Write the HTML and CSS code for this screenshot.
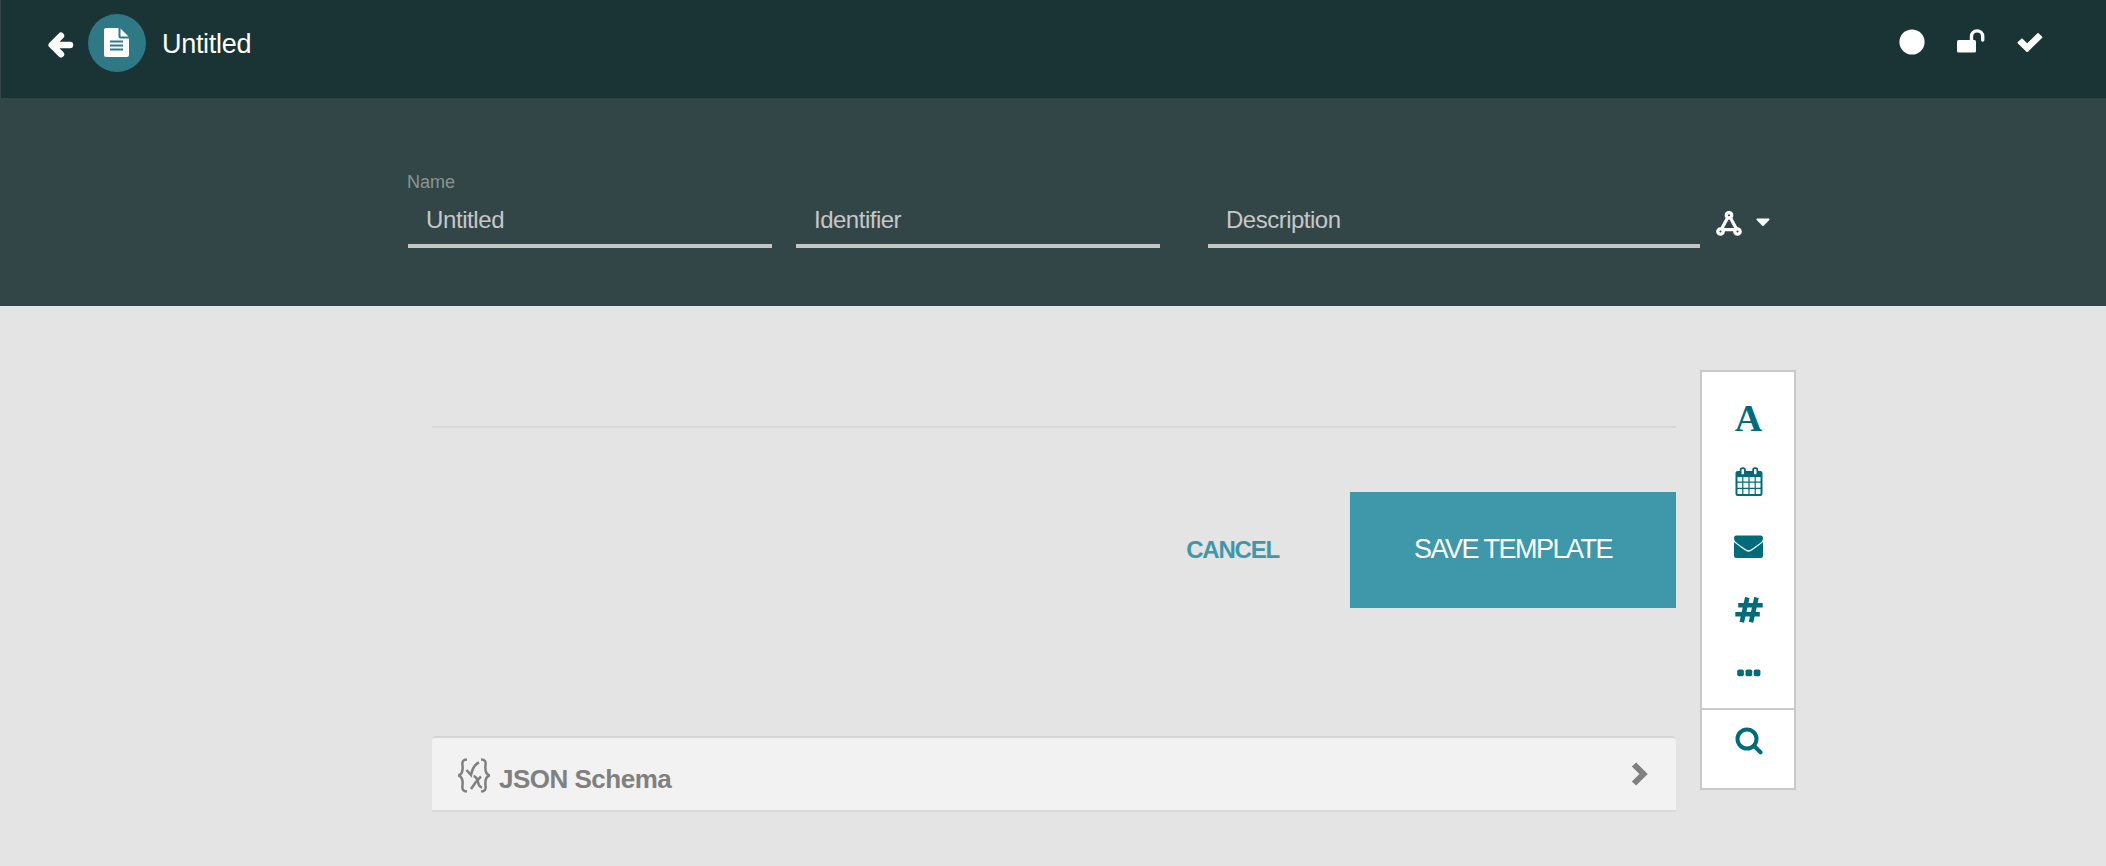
FILE: index.html
```html
<!DOCTYPE html>
<html lang="en">
<head>
<meta charset="utf-8">
<title>Untitled</title>
<link rel="stylesheet" href="styles.css">
</head>
<body>
<header class="topbar">
  <svg class="back" viewBox="0 0 26 26"><path d="M22 13H5M13 3.700L3.700 13L13 22.300" fill="none" stroke="#fff" stroke-width="6.400" stroke-linecap="round" stroke-linejoin="round"/></svg>
  <span class="avatar"><svg width="26" height="30" viewBox="0 0 26 30"><path fill="#fff" d="M2 0H14.500V8.500Q14.500 10.500 16.500 10.500H25V27Q25 29 23 29H2Q0 29 0 27V2Q0 0 2 0ZM16.500 .5L24.500 8.600H16.500Z"/><path d="M6 13.500H19M6 17.500H19M6 21.500H19" stroke="#2f7886" stroke-width="2"/></svg></span>
  <h1 class="title">Untitled</h1>
  <div class="actions">
    <svg width="26" height="26" viewBox="0 0 26 26"><circle cx="13" cy="13" r="12.600" fill="#fff"/></svg>
    <svg width="28" height="26" viewBox="0 0 28 26"><rect x="0" y="11" width="19" height="12.500" rx="1.500" fill="#fff"/><path d="M14.500 12V7.500A5.600 5.600 0 0 1 25.700 7.500V11" fill="none" stroke="#fff" stroke-width="3.400" stroke-linecap="round"/></svg>
    <svg width="26" height="26" viewBox="0 0 26 26"><path d="M2.800 11.300L5 9.300L10.200 14.300L21 3.700L25 7.500Q25.800 8.300 25 9.100L11 22.700Q10.200 23.400 9.400 22.700L.9 14.500Q0 13.500 .9 12.700Z" fill="#fff"/></svg>
  </div>
</header>
<section class="meta">
  <div class="field"><span class="label">Name</span><span class="value w1">Untitled</span></div>
  <div class="field"><span class="value w2">Identifier</span></div>
  <div class="field wide"><span class="value w3">Description</span></div>
  <svg class="nodes" width="26" height="26" viewBox="0 0 26 26"><g fill="none" stroke="#fff" stroke-width="3.300"><circle cx="13" cy="4.200" r="2.700"/><circle cx="4.500" cy="20.500" r="2.700"/><circle cx="21.500" cy="20.500" r="2.700"/><path d="M11.500 7L5.500 18M14.500 7L20.500 18M7 18.700H19"/></g></svg>
  <svg class="caret" width="14" height="9" viewBox="0 0 14 9"><path fill="#fff" d="M1 .5H13Q14 1 13.300 2L7.700 7.700Q7 8.400 6.300 7.700L.7 2Q0 1 1 .5Z"/></svg>
</section>
<div class="workspace">
  <main class="form">
    <hr class="rule">
    <div class="buttons"><button class="cancel">CANCEL</button><button class="save">SAVE TEMPLATE</button></div>
    <div class="panel">
      <svg class="json" width="32" height="36" viewBox="0 0 32 36"><g fill="none" stroke="#808080" stroke-width="2.500"><path d="M9 1.500C5 1.500 4 3.500 4.500 7.500C5 12 5 16 .5 17.500C5 19 5 23 4.500 27.500C4 31.500 5 33.500 9 33.500M23 1.500C27 1.500 28 3.500 27.500 7.500C27 12 27 16 31.500 17.500C27 19 27 23 27.500 27.500C28 31.500 27 33.500 23 33.500"/><path d="M8.500 12L13 17Q15 7 21 4.500M15.500 18Q19 19 20 24T24 29.500M23 18.500Q18 23 13 31"/></g></svg>
      <span class="panel-title">JSON Schema</span>
      <svg class="chevron" width="18" height="24" viewBox="0 0 18 24"><path d="M3 2.500L12.500 12L3 21.500" fill="none" stroke="#808080" stroke-width="6"/></svg>
    </div>
  </main>
  <aside class="toolbox">
    <div class="tools">
      <span class="font-tool">A</span>
      <svg width="28" height="30" viewBox="0 0 28 30"><rect x=".5" y="4" width="27" height="25" rx="2" fill="#006b7b"/><path d="M2.500 10H7.200V14.500H2.500ZM8.400 10H13.400V14.500H8.400ZM14.600 10H19.600V14.500H14.600ZM20.800 10H25.500V14.500H20.800ZM2.500 15.800H7.200V20.800H2.500ZM8.400 15.800H13.400V20.800H8.400ZM14.600 15.800H19.600V20.800H14.600ZM20.800 15.800H25.500V20.800H20.800ZM2.500 22H7.200V27H2.500ZM8.400 22H13.400V27H8.400ZM14.600 22H19.600V27H14.600ZM20.800 22H25.500V27H20.800Z" fill="#fff"/><g fill="#fff" stroke="#006b7b" stroke-width="1.800"><rect x="5.600" y="1.200" width="4.300" height="7" rx="1.800"/><rect x="18.100" y="1.200" width="4.300" height="7" rx="1.800"/></g></svg>
      <svg width="29" height="24" viewBox="0 0 29 24"><path fill="#006b7b" d="M2.500 .5H26.500Q29 .5 29 3C29 5.500 27.500 7 25.500 8.500L17 14.500Q14.500 16 12 14.500L3.500 8.500C1.500 7 0 5.500 0 3Q0 .5 2.500 .5ZM0 7Q1 8.200 10.500 15Q14.500 18.300 18.500 15Q28 8.200 29 7V20.500Q29 23 26.500 23H2.500Q0 23 0 20.500Z"/></svg>
      <svg width="28" height="26" viewBox="0 0 28 26"><path d="M12.300 .5L6.800 25.300M21.500 .5L16 25.300M3.200 8.300H27.700M.3 17.300H24.800" fill="none" stroke="#006b7b" stroke-width="4.600"/></svg>
      <svg width="24" height="8" viewBox="0 0 24 8"><g fill="#006b7b"><rect x=".2" y=".5" width="6.700" height="6.700" rx="1.800"/><rect x="8.500" y=".5" width="6.700" height="6.700" rx="1.800"/><rect x="16.700" y=".5" width="6.700" height="6.700" rx="1.800"/></g></svg>
    </div>
    <div class="search"><svg width="28" height="28" viewBox="0 0 28 28"><circle cx="12" cy="12" r="9.500" fill="none" stroke="#006b7b" stroke-width="4"/><path d="M19 19L25.500 25.300" stroke="#006b7b" stroke-width="4" stroke-linecap="round"/></svg></div>
  </aside>
</div>
</body>
</html>
```
FILE: styles.css
```css
* { box-sizing: border-box; }
body { margin: 0; height: 866px; overflow: hidden; background: #e4e4e4; font-family: "Liberation Sans", Arial, sans-serif; }
svg { display: block; flex: none; }
.topbar { display: flex; align-items: center; height: 98px; padding: 0 63px 12px 47px; background: #1a3335; border-left: 1px solid #324648; color: #fff; }
.back { width: 26px; height: 26px; margin-top: 3px; }
.avatar { display: flex; align-items: center; justify-content: center; width: 58px; height: 58px; margin-left: 14px; padding-bottom: 1px; border-radius: 50%; background: #2f7886; }
.title { margin: 1px 0 0 16px; font-size: 27px; font-weight: 400; line-height: 32px; letter-spacing: -.3px; }
.actions { display: flex; align-items: center; gap: 32px; margin: -3px 0 0 auto; }
.meta { display: flex; height: 208px; padding-left: 408px; background: #324648; color: #c7c7c7; }
.field { display: flex; flex-direction: column; justify-content: flex-end; width: 364px; height: 150px; margin-right: 24px; border-bottom: 4px solid #c5c5c3; }
.wide { width: 492px; margin-left: 24px; margin-right: 16px; }
.label { height: 20px; margin: 0 0 14px -1px; font-size: 18px; line-height: 20px; color: #899492; }
.value { height: 38px; padding-left: 18px; font-size: 24px; line-height: 28px; }
.w1 { letter-spacing: -.4px; }
.w2, .w3 { letter-spacing: -.5px; }
.nodes { margin-top: 113px; }
.caret { margin: 120px 0 0 14px; }
.workspace { display: flex; align-items: flex-start; height: 560px; padding: 64px 0 0 432px; }
.form { width: 1244px; padding-top: 56px; }
.rule { height: 2px; margin: 0; border: 0; background: #d7d7d7; }
.buttons { display: flex; justify-content: flex-end; align-items: center; height: 116px; margin-top: 64px; }
button { border: 0; padding: 0; font-family: inherit; }
.cancel { margin-right: 71px; background: none; color: #3f97aa; font-size: 24px; font-weight: 700; line-height: 28px; letter-spacing: -1.2px; }
.save { width: 326px; height: 116px; padding-bottom: 2px; background: #3f97aa; color: #fff; font-size: 27px; letter-spacing: -1.5px; }
.panel { display: flex; align-items: center; height: 76px; margin-top: 128px; padding: 0 27px; border-top: 2px solid #d5d5d5; border-bottom: 2px solid #d9d9d9; border-radius: 4px 4px 0 0; background: #f2f2f2; }
.json { margin: 3px 0 0 -1px; }
.panel-title { margin: 9px 0 0 9px; color: #808080; font-size: 26px; font-weight: 700; line-height: 30px; letter-spacing: -.5px; }
.chevron { margin-left: auto; }
.toolbox { width: 96px; height: 420px; margin-left: 24px; border: 2px solid #c9c9c9; background: #fff; }
.tools { display: flex; flex-direction: column; align-items: center; height: 338px; padding: 29px 0 0 1px; border-bottom: 2px solid #c9c9c9; }
.font-tool { height: 34px; margin-bottom: 32px; font: bold 38px/34px "Liberation Serif", serif; color: #006b7b; }
.tools svg:nth-child(3) { margin-top: 38px; }
.tools svg:nth-child(4) { margin-top: 38px; }
.tools svg:nth-child(5) { margin-top: 46px; }
.search { display: flex; justify-content: center; padding: 17px 0 0 1px; }
```
